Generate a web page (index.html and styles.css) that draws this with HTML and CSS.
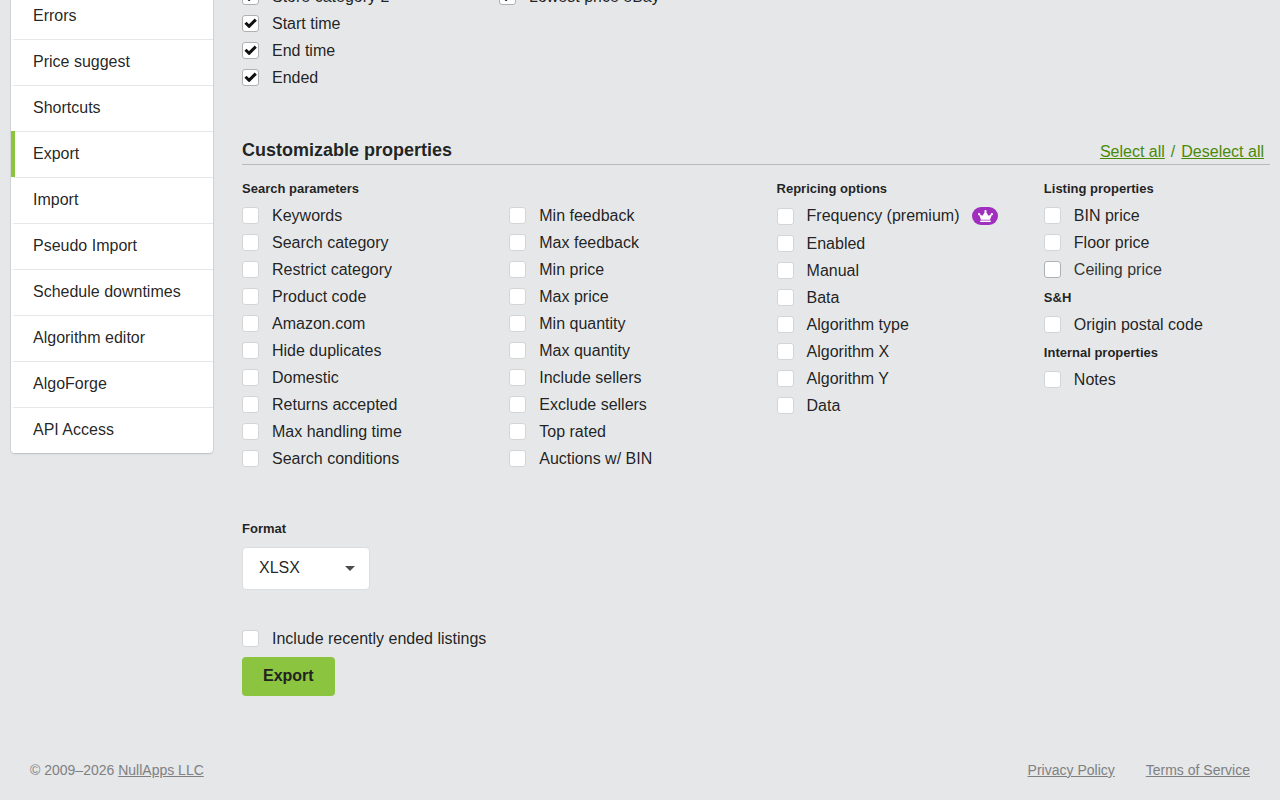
FILE: index.html
```html
<!DOCTYPE html>
<html lang="en">
<head>
	<meta charset="UTF-8">
	<meta name="viewport" content="width=device-width, initial-scale=1.0">
	<title>Export</title>
	<link rel="stylesheet" href="styles.css">
</head>
<body>

	<div class="page">
		<nav class="side_menu">
			<a href="#">Errors</a>
			<a href="#">Price suggest</a>
			<a href="#">Shortcuts</a>
			<a href="#" class="active">Export</a>
			<a href="#">Import</a>
			<a href="#">Pseudo Import</a>
			<a href="#">Schedule downtimes</a>
			<a href="#">Algorithm editor</a>
			<a href="#">AlgoForge</a>
			<a href="#">API Access</a>
		</nav>

		<main class="content">
			<form>
				<div class="columns basic">
					<div>
						<label class="check"><input type="checkbox" checked>Store category 2</label>
						<label class="check"><input type="checkbox" checked>Start time</label>
						<label class="check"><input type="checkbox" checked>End time</label>
						<label class="check"><input type="checkbox" checked>Ended</label>
					</div>
					<div>
						<label class="check"><input type="checkbox" checked>Lowest price eBay</label>
					</div>
				</div>

				<div class="section_head">
					<h2>Customizable properties</h2>
					<div class="select_links"><a href="#">Select all</a> / <a href="#">Deselect all</a></div>
				</div>

				<div class="columns custom">
					<div>
						<h3>Search parameters</h3>
						<label class="check"><input type="checkbox">Keywords</label>
						<label class="check"><input type="checkbox">Search category</label>
						<label class="check"><input type="checkbox">Restrict category</label>
						<label class="check"><input type="checkbox">Product code</label>
						<label class="check"><input type="checkbox">Amazon.com</label>
						<label class="check"><input type="checkbox">Hide duplicates</label>
						<label class="check"><input type="checkbox">Domestic</label>
						<label class="check"><input type="checkbox">Returns accepted</label>
						<label class="check"><input type="checkbox">Max handling time</label>
						<label class="check"><input type="checkbox">Search conditions</label>
					</div>
					<div class="no_title">
						<label class="check"><input type="checkbox">Min feedback</label>
						<label class="check"><input type="checkbox">Max feedback</label>
						<label class="check"><input type="checkbox">Min price</label>
						<label class="check"><input type="checkbox">Max price</label>
						<label class="check"><input type="checkbox">Min quantity</label>
						<label class="check"><input type="checkbox">Max quantity</label>
						<label class="check"><input type="checkbox">Include sellers</label>
						<label class="check"><input type="checkbox">Exclude sellers</label>
						<label class="check"><input type="checkbox">Top rated</label>
						<label class="check"><input type="checkbox">Auctions w/ BIN</label>
					</div>
					<div>
						<h3>Repricing options</h3>
						<label class="check premium"><input type="checkbox">Frequency (premium)
							<span class="crown">
								<svg viewBox="0 0 640 512" width="15" height="12"><path fill="#fff" d="M528 448H112c-8.800 0-16 7.200-16 16v32c0 8.800 7.200 16 16 16h416c8.800 0 16-7.200 16-16v-32c0-8.800-7.200-16-16-16zm64-320c-26.500 0-48 21.500-48 48 0 7.100 1.600 13.700 4.400 19.800L476 239.200c-15.400 9.200-35.300 4-44.200-11.600L350.300 85C361 76.200 368 63 368 48c0-26.500-21.500-48-48-48s-48 21.500-48 48c0 15 7 28.200 17.700 37l-81.500 142.600c-8.900 15.600-28.900 20.800-44.200 11.600l-72.300-43.400c2.700-6 4.400-12.700 4.400-19.800 0-26.500-21.500-48-48-48S0 149.500 0 176s21.500 48 48 48c2.600 0 5.200-.4 7.700-.8L128 416h384l72.300-192.800c2.500.4 5.100.8 7.700.8 26.500 0 48-21.500 48-48s-21.500-48-48-48z"/></svg>
							</span>
						</label>
						<label class="check"><input type="checkbox">Enabled</label>
						<label class="check"><input type="checkbox">Manual</label>
						<label class="check"><input type="checkbox">Bata</label>
						<label class="check"><input type="checkbox">Algorithm type</label>
						<label class="check"><input type="checkbox">Algorithm X</label>
						<label class="check"><input type="checkbox">Algorithm Y</label>
						<label class="check"><input type="checkbox">Data</label>
					</div>
					<div>
						<h3>Listing properties</h3>
						<label class="check"><input type="checkbox">BIN price</label>
						<label class="check"><input type="checkbox">Floor price</label>
						<label class="check hover"><input type="checkbox">Ceiling price</label>
						<h3>S&amp;H</h3>
						<label class="check"><input type="checkbox">Origin postal code</label>
						<h3>Internal properties</h3>
						<label class="check"><input type="checkbox">Notes</label>
					</div>
				</div>

				<div class="format">
					<label for="format">Format</label>
					<div class="select_box">
						<select id="format">
							<option>XLSX</option>
							<option>CSV</option>
						</select>
					</div>
				</div>

				<label class="check"><input type="checkbox">Include recently ended listings</label>
				<button type="submit" class="export_btn">Export</button>
			</form>
		</main>
	</div>

	<footer class="footer">
		<div>© 2009–2026 <a href="#">NullApps LLC</a></div>
		<div class="footer_links">
			<a href="#">Privacy Policy</a>
			<a href="#">Terms of Service</a>
		</div>
	</footer>

</body>
</html>
```

FILE: styles.css
```css
* {
	box-sizing: border-box;
}

body {
	margin: 0;
	overflow: hidden;
	background: #e5e7e9;
	color: rgba(0, 0, 0, .87);
	font-family: "Liberation Sans", Arial, sans-serif;
	font-size: 16px;
	line-height: 24px;
}

h2, h3 {
	margin: 0;
}

/* page is scrolled part of the way down */
.page {
	display: flex;
	align-items: flex-start;
	gap: 29px;
	margin-top: -17px;
	padding: 0 10px 0 11px;
}

/* side menu */
.side_menu {
	flex: 0 0 202px;
	margin-top: 10px;
	overflow: hidden;
	background: #fff;
	border-radius: 0 0 4px 4px;
	box-shadow: 0 1px 2px 0 rgba(34, 36, 38, .15), 0 0 0 1px rgba(34, 36, 38, .06);
}

.side_menu a {
	display: block;
	position: relative;
	padding: 10px 18px 11px;
	border-left: 4px solid #fff;
	border-top: 1px solid #e6e7e8;
	color: inherit;
	text-decoration: none;
}

.side_menu a.active::before {
	content: "";
	position: absolute;
	left: -4px;
	top: -1px;
	bottom: 0;
	width: 4px;
	background: #8bc53f;
}

/* checkboxes */
.content {
	flex: 1;
}

.columns {
	display: grid;
	grid-template-columns: repeat(4, 1fr);
}

.custom {
	column-gap: 4%;
	margin-top: 9px;
}

.no_title {
	padding-top: 28px;
}

.check {
	display: flex;
	align-items: center;
	gap: 13px;
	height: 27px;
}

.check input {
	appearance: none;
	flex: none;
	width: 17px;
	height: 17px;
	margin: 0;
	background: #fff;
	border: 1px solid #d4d5d6;
	border-radius: 3px;
}

.check input:checked {
	border-color: #b0b1b2;
	background: #fff url("data:image/svg+xml,%3Csvg xmlns='http://www.w3.org/2000/svg' viewBox='0 0 15 15'%3E%3Cpath fill='none' stroke='%23111' stroke-width='3' stroke-linejoin='round' d='M2.500 6.800L6 10.300L12.800 3.700'/%3E%3C/svg%3E") center / 15px 15px no-repeat;
}

.check.hover {
	color: rgba(0, 0, 0, .8);
}

.check.hover input {
	border-color: #b0b1b2;
}

.premium {
	height: 28px;
}

.crown {
	display: flex;
	align-items: center;
	justify-content: center;
	width: 26px;
	height: 18px;
	background: #a02fbf;
	border-radius: 9px;
}

.section_head {
	display: flex;
	justify-content: space-between;
	align-items: flex-end;
	margin-top: 45px;
	padding-right: 6px;
	border-bottom: 1px solid #babbbc;
}

h2 {
	font-size: 18px;
	line-height: 28px;
}

.select_links {
	display: flex;
	gap: 6px;
}

.select_links,
.select_links a {
	color: #4b8a08;
}

h3, .format label {
	display: block;
	padding-top: 1px;
	font-size: 13px;
	font-weight: bold;
	line-height: 27px;
}

/* format */
.format {
	margin: 42px 0 35px;
}

.select_box {
	display: flex;
	align-items: center;
	width: 128px;
	margin-top: 5px;
	position: relative;
}

.select_box::after {
	content: "";
	position: absolute;
	right: 15px;
	border: 5px solid transparent;
	border-top-color: #4b4c4d;
	border-bottom: 0;
}

select {
	appearance: none;
	width: 100%;
	padding: 8px 16px 9px;
	background: #fff;
	border: 1px solid #dcddde;
	border-radius: 4px;
	color: inherit;
	font: inherit;
}

.export_btn {
	display: block;
	margin-top: 5px;
	padding: 7px 21px 8px;
	background: #8bc53f;
	border: 0;
	border-radius: 4px;
	color: #222;
	font: inherit;
	font-weight: bold;
}

/* footer */
.footer {
	display: flex;
	justify-content: space-between;
	padding: 62px 30px 18px;
	font-size: 14px;
}

.footer, .footer a {
	color: #7f8081;
}

.footer_links {
	display: flex;
	gap: 31px;
}
```
